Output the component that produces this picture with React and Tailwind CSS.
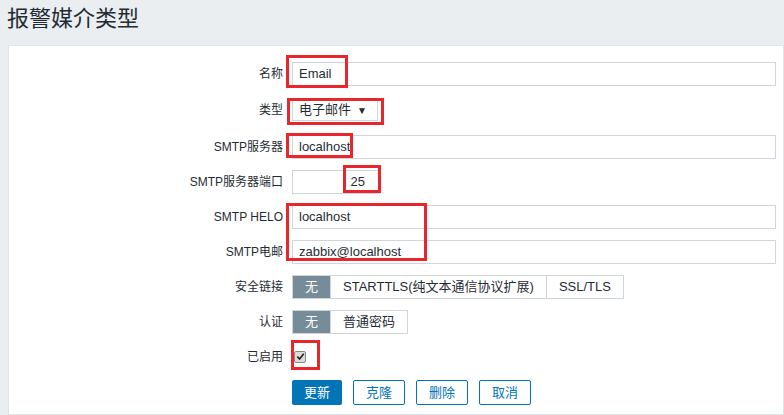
const F = { fontFamily: '"Liberation Sans", "Noto Sans CJK SC", sans-serif' }

function Row({ label, children, h = 'h-[35px]' }) {
  return (
    <div className={`flex items-center ${h}`}>
      <div className="w-[283px] pr-[9px] text-right text-[12px] text-[#1f2c33]">{label}</div>
      <div className="flex-1 flex items-center">{children}</div>
    </div>
  )
}

const Input = ({ value, className = '' }) => (
  <div className={`h-[24px] border border-[#cfd5d9] bg-white px-[6px] flex items-center text-[13px] text-[#1f2c33] ${className}`}>{value}</div>
)

function Seg({ items }) {
  return (
    <div className="flex h-[24px] border border-[#cfd5d9] text-[13px]">
      {items.map((t, i) => (
        <div key={t} className={`px-[12px] flex items-center ${i === 0 ? 'bg-[#768d99] text-white' : 'bg-white text-[#1f2c33] border-l border-[#cfd5d9]'}`}>{t}</div>
      ))}
    </div>
  )
}

const Red = ({ c }) => <div className={`absolute border-[3px] border-[#e8262b] ${c}`} />

export default function App() {
  return (
    <div style={F} className="w-[784px] h-[415px] bg-[#ebeef0] overflow-hidden">
      <div className="h-[45px] pl-[7px] pt-[2px] text-[22px] text-[#1f2c33]">报警媒介类型</div>
      <div className="relative ml-[8px] h-[370px] bg-white border border-[#dfe4e7] pt-[10px]">
        <Row label="名称"><Input value="Email" className="w-[484px]" /></Row>
        <Row label="类型" h="h-[38px]">
          <div className="h-[22px] w-[86px] border border-[#cfd5d9] flex items-center justify-between px-[6px] text-[13px] text-[#1f2c33]">电子邮件<span className="text-[10px] pr-[4px]">▼</span></div>
        </Row>
        <Row label="SMTP服务器"><Input value="localhost" className="w-[484px] border-[#4796c4]" /></Row>
        <Row label="SMTP服务器端口"><Input value="25" className="w-[88px] justify-end pr-[14px]" /></Row>
        <Row label="SMTP HELO"><Input value="localhost" className="w-[484px]" /></Row>
        <Row label="SMTP电邮"><Input value="zabbix@localhost" className="w-[484px]" /></Row>
        <Row label="安全链接"><Seg items={['无', 'STARTTLS(纯文本通信协议扩展)', 'SSL/TLS']} /></Row>
        <Row label="认证"><Seg items={['无', '普通密码']} /></Row>
        <Row label="已启用">
          <div className="w-[12px] h-[12px] ml-[2px] border border-[#8a8a8a] bg-[#dcdcdc] rounded-[2px] flex items-center justify-center">
            <svg width="9" height="9" viewBox="0 0 10 10"><path d="M1.5 5.2 L4 7.8 L8.6 2" fill="none" stroke="#222" strokeWidth="1.8" /></svg>
          </div>
        </Row>
        <div className="flex gap-[11px] pl-[283px] pt-[6px] text-[13px]">
          <div className="h-[25px] px-[12px] flex items-center bg-[#0275b8] text-white rounded-[2px]">更新</div>
          {['克隆', '删除', '取消'].map(t => (
            <div key={t} className="h-[25px] px-[12px] flex items-center border border-[#0275b8] text-[#0275b8] rounded-[2px]">{t}</div>
          ))}
        </div>
        <Red c="left-[277px] top-[9px] w-[62px] h-[33px]" />
        <Red c="left-[278px] top-[52px] w-[97px] h-[27px]" />
        <Red c="left-[277px] top-[87px] w-[67px] h-[25px]" />
        <Red c="left-[334px] top-[119px] w-[38px] h-[28px]" />
        <Red c="left-[277px] top-[157px] w-[141px] h-[58px]" />
        <Red c="left-[282px] top-[294px] w-[29px] h-[30px]" />
      </div>
    </div>
  )
}
